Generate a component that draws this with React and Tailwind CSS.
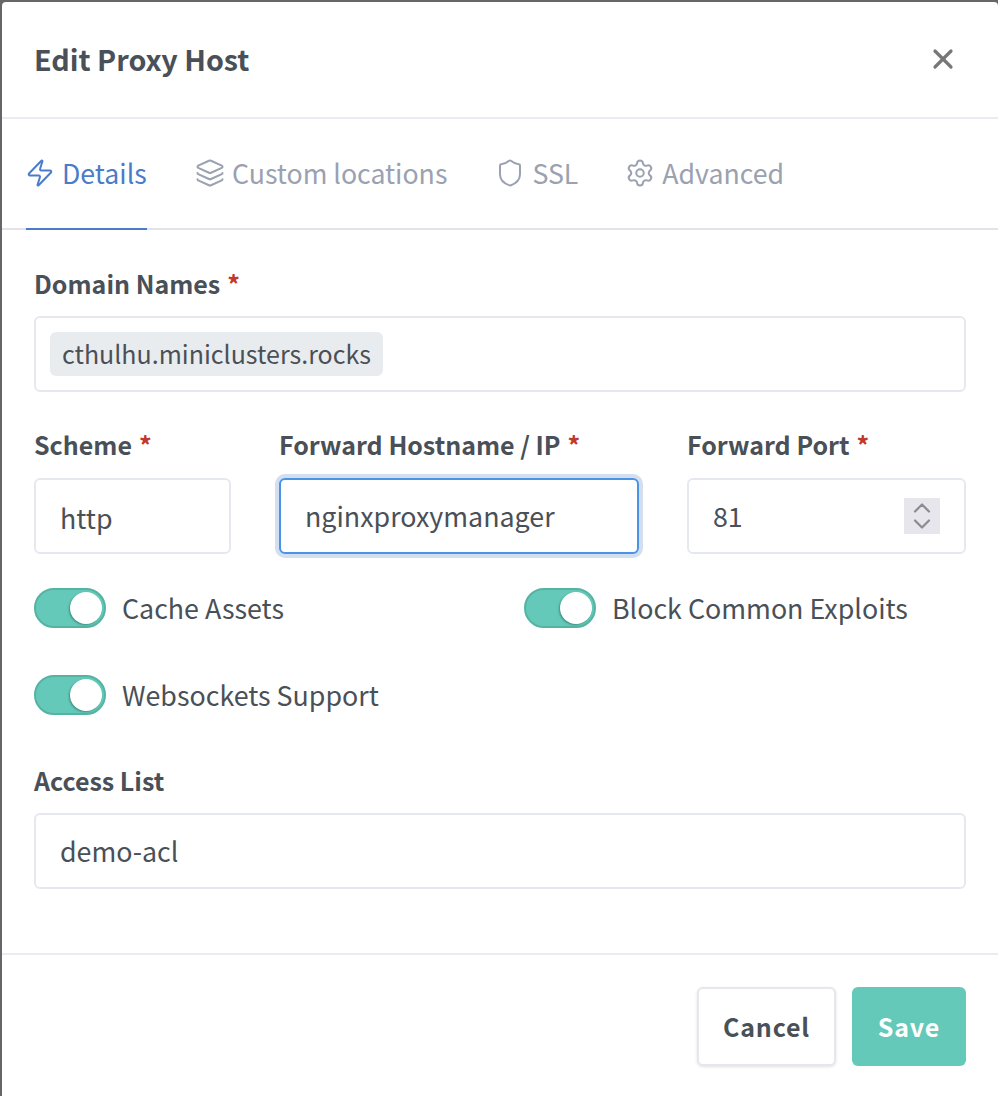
import React from 'react';
import { Zap, Layers, Shield, Settings, X } from 'lucide-react';

const font = { fontFamily: '"Noto Sans CJK SC", "Open Sans", sans-serif' };

const Tab = ({ icon: Icon, label, active, className = '' }) => (
  <div
    className={`flex items-center h-[111px] pb-[2px] border-b-2 gap-[7px] ${
      active ? 'border-[#4a7cc9] text-[#4a7cc9]' : 'border-transparent text-[#9aa1b0]'
    } ${className}`}
  >
    <Icon className={`w-[30px] h-[30px] shrink-0 ${active ? '-ml-[1px]' : ''}`} strokeWidth={1.6} />
    <span className="text-[26.7px] leading-[36px]">{label}</span>
  </div>
);

const Label = ({ children, required }) => (
  <label className="block h-[32px] text-[25px] leading-[32px] font-semibold text-[#495057]">
    {children}
    {required && <span className="text-[#c0392b] ml-[7px]">*</span>}
  </label>
);

const Field = ({ children, focused, className = 'px-[24px]' }) => (
  <div
    className={`flex items-center h-[76px] rounded-[6px] bg-white text-[26.8px] text-[#495057] border-2 ${
      focused ? 'border-[#4a94e8] shadow-[0_0_0_4px_#d3dff1]' : 'border-[#e6e8ef]'
    } ${className}`}
  >
    {children}
  </div>
);

const Toggle = ({ label }) => (
  <div className="flex items-center h-[40px] gap-[16px]">
    <div className="relative w-[72px] h-[40px] rounded-full bg-[#64c9b8] border-2 border-[#55b3a4] shrink-0">
      <div className="absolute right-[2px] top-[2px] w-[32px] h-[32px] rounded-full bg-white shadow-[-1px_1px_2px_#3f8f82]" />
    </div>
    <span className="text-[26.8px] leading-[36px] text-[#495057]">{label}</span>
  </div>
);

const Spinner = () => (
  <span className="flex flex-col items-center justify-center gap-[6px] w-[36px] h-[36px] bg-[#e6e6ec] text-[#8b8b93]">
    <svg width="18" height="10" viewBox="0 0 18 10" fill="none" stroke="currentColor" strokeWidth="2.2" strokeLinecap="round" strokeLinejoin="round">
      <polyline points="2,8.5 9,1.5 16,8.5" />
    </svg>
    <svg width="18" height="10" viewBox="0 0 18 10" fill="none" stroke="currentColor" strokeWidth="2.2" strokeLinecap="round" strokeLinejoin="round">
      <polyline points="2,1.5 9,8.5 16,1.5" />
    </svg>
  </span>
);

export default function App() {
  return (
    <div style={font} className="w-[998px] h-[1096px] bg-[#666] pt-[2px] pl-[2px] overflow-hidden">
      <div className="flex flex-col h-[1094px] bg-white rounded-tl-[4px] rounded-tr-[4px]">
        {/* Header */}
        <div className="flex items-center justify-between h-[113px] pb-[2px] pl-[32px] pr-[39px] border-b-2 border-[#e9edf2] box-content">
          <h2 className="text-[28.7px] leading-[36px] font-bold text-[#495057]">Edit Proxy Host</h2>
          <X className="w-[32px] h-[32px] text-[#777]" strokeWidth={2.4} />
        </div>

        {/* Tabs */}
        <div className="flex h-[109px] pl-[24px] border-b-2 border-[#e1e3e8] box-content">
          <Tab icon={Zap} label="Details" active className="w-[121px]" />
          <Tab icon={Layers} label="Custom locations" className="ml-[48px]" />
          <Tab icon={Shield} label="SSL" className="ml-[48px]" />
          <Tab icon={Settings} label="Advanced" className="ml-[47px]" />
        </div>

        {/* Form */}
        <div className="flex-1 pt-[37px] pl-[32px] pr-[32px]">
          <Label required>Domain Names</Label>
          <Field className="mt-[17px] px-[14px]">
            <span className="flex items-center h-[44px] rounded-[6px] bg-[#e9ecef] px-[12px] text-[25px]">
              cthulhu.miniclusters.rocks
            </span>
          </Field>

          <div className="grid grid-cols-[197px_360px_279px] gap-x-[48px] mt-[36px]">
            <div>
              <Label required>Scheme</Label>
              <Field className="mt-[18px] px-[24px] pt-[5px]">http</Field>
            </div>
            <div>
              <Label required>Forward Hostname / IP</Label>
              <Field focused className="mt-[18px] px-[24px]">nginxproxymanager</Field>
            </div>
            <div>
              <Label required>Forward Port</Label>
              <Field className="mt-[18px] px-[24px] justify-between">
                81
                <Spinner />
              </Field>
            </div>
          </div>

          <div className="grid grid-cols-[490px_1fr] mt-[34px] gap-y-[47px]">
            <Toggle label="Cache Assets" />
            <Toggle label="Block Common Exploits" />
            <Toggle label="Websockets Support" />
          </div>

          <div className="mt-[49px]">
            <Label>Access List</Label>
            <Field className="mt-[17px] px-[24px]">demo-acl</Field>
          </div>
        </div>

        {/* Footer */}
        <div className="flex justify-end items-start gap-[16px] h-[143px] pt-[32px] pr-[32px] border-t-2 border-[#e9edf2]">
          <button className="w-[139px] h-[79px] rounded-[6px] border-2 border-[#e4e7ee] bg-white text-[25px] font-bold tracking-[0.8px] text-[#495057] shadow-[0_1px_3px_rgba(0,0,0,0.12)]">
            Cancel
          </button>
          <button className="w-[114px] h-[79px] rounded-[6px] bg-[#64c9b8] text-[25px] font-bold tracking-[0.8px] text-white">
            Save
          </button>
        </div>
      </div>
    </div>
  );
}
